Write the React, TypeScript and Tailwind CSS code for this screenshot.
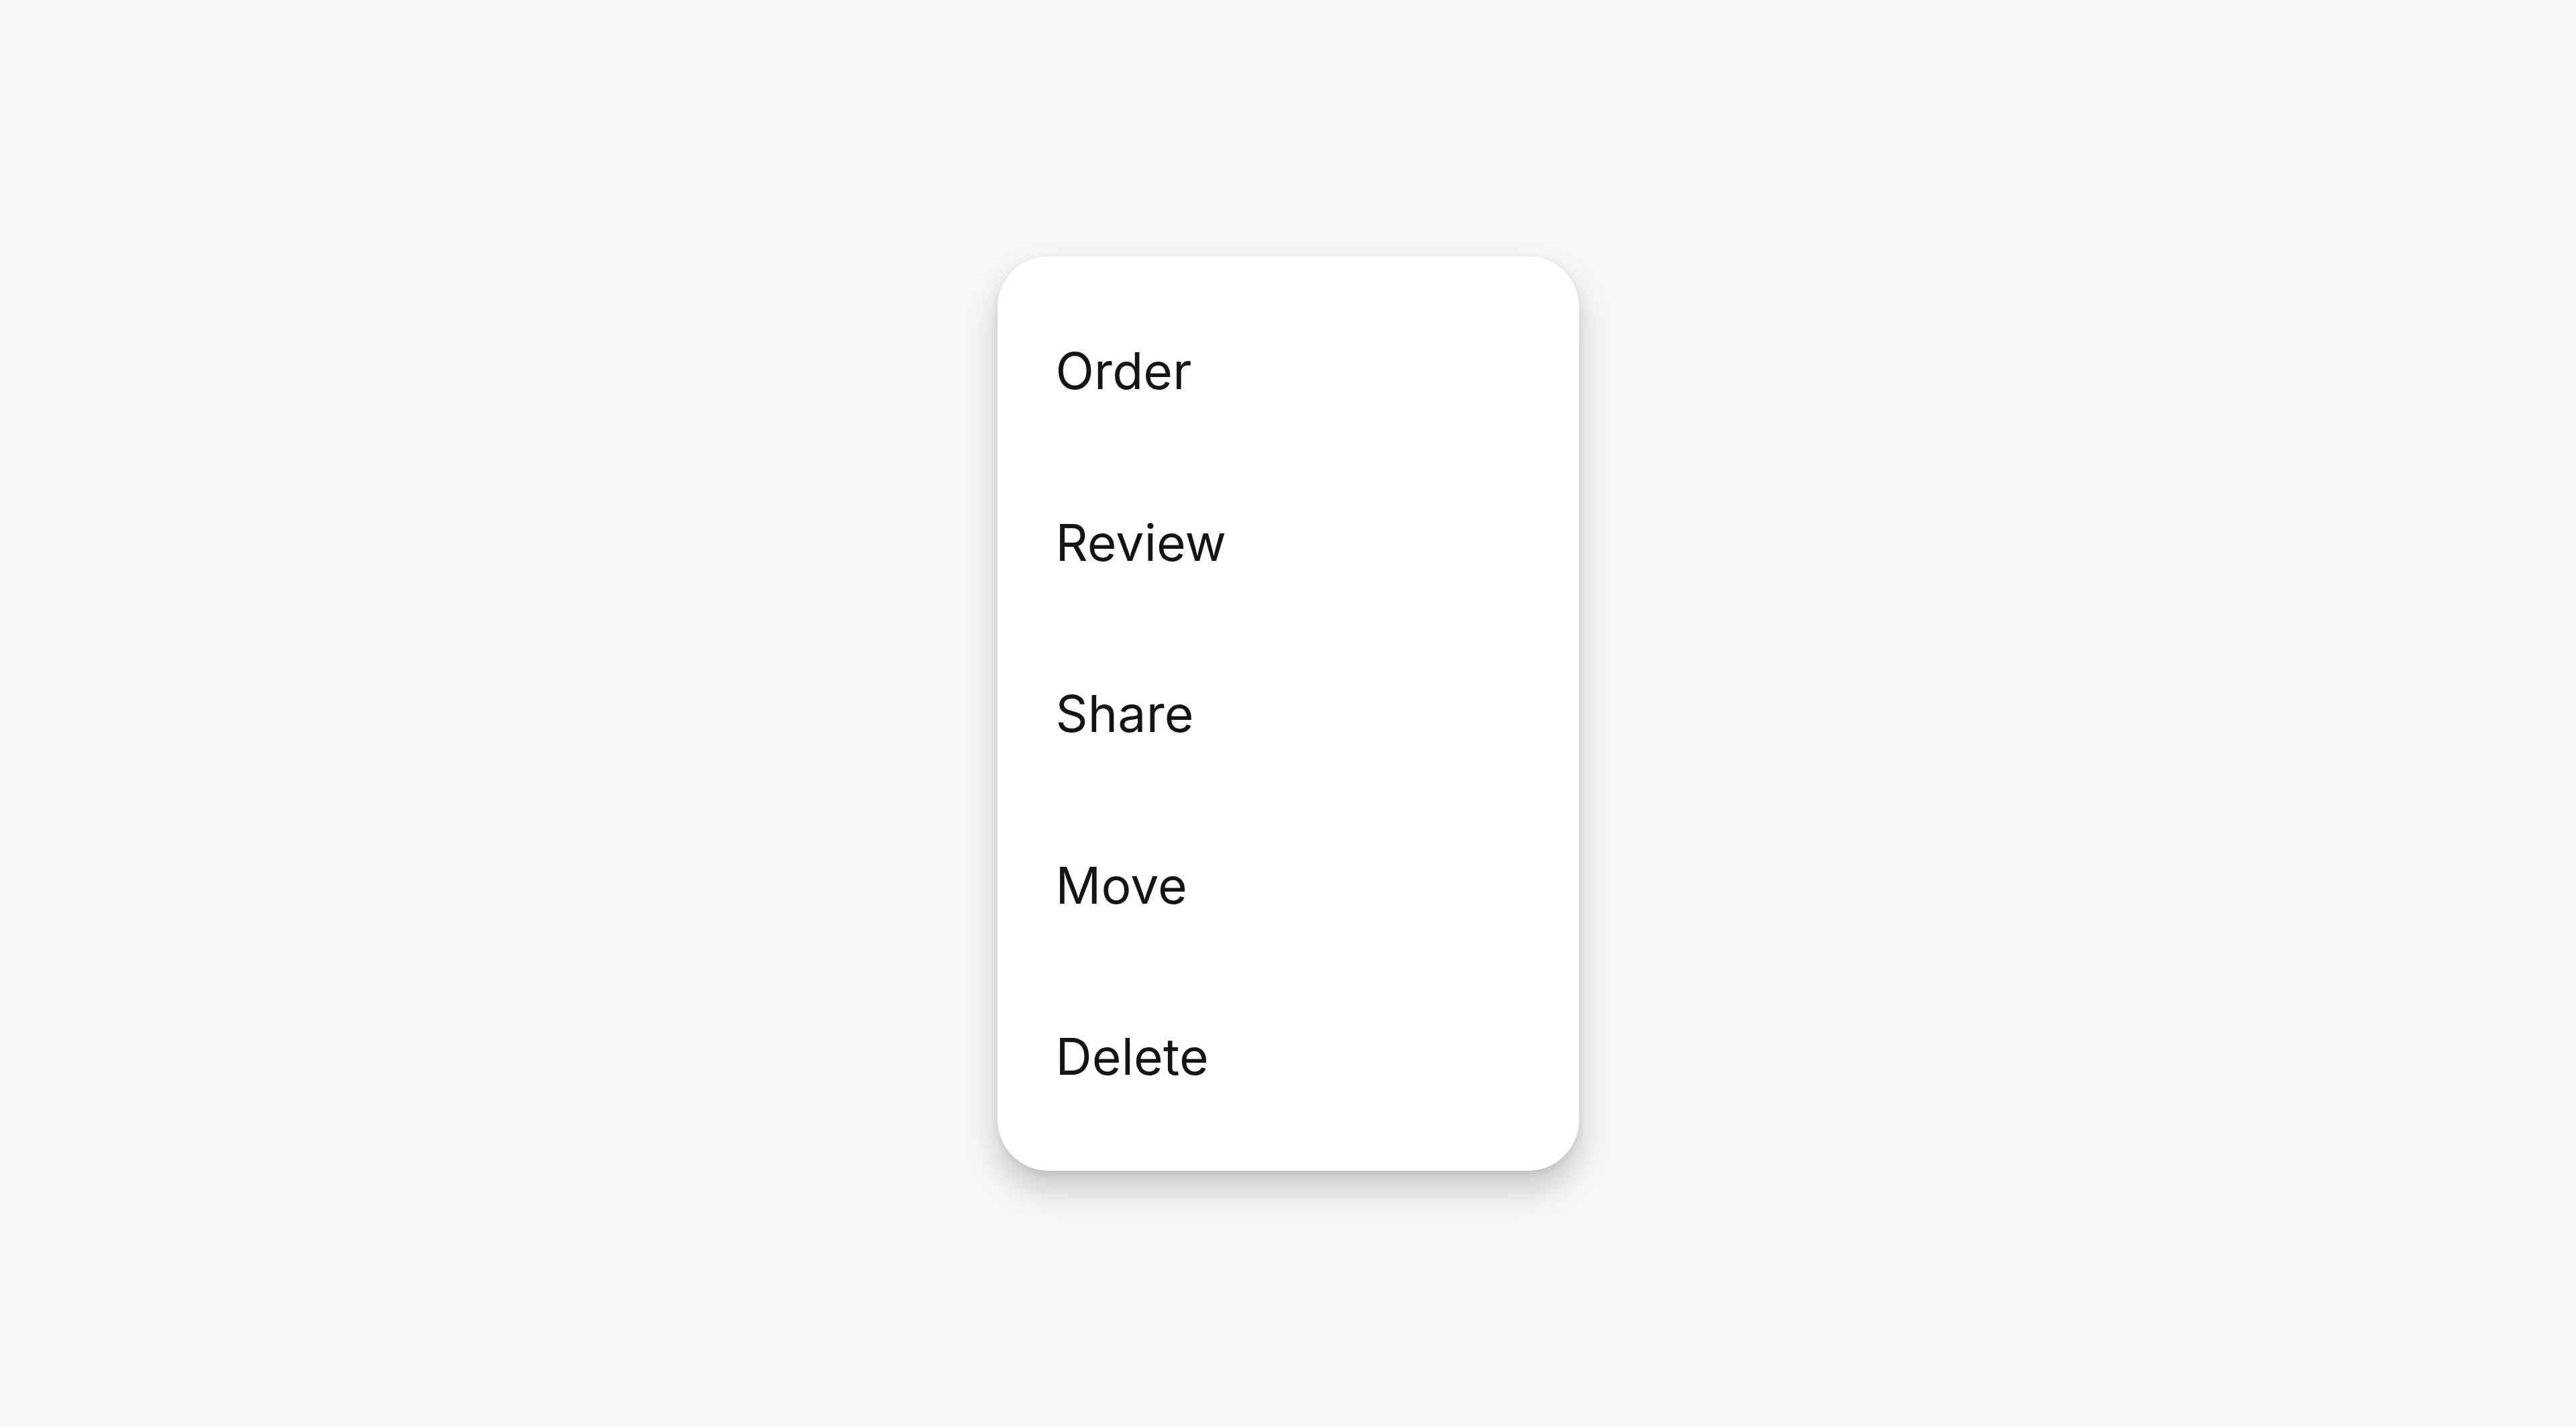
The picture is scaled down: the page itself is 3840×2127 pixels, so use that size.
const items = ['Order', 'Review', 'Share', 'Move', 'Delete'];

export default function App() {
  return (
    <div className="flex min-h-screen items-center justify-center bg-[#f7f7f7] font-['Inter',sans-serif]">
      <div className="w-[867px] rounded-[76px] bg-white py-[43px] shadow-[0_26px_50px_rgba(0,0,0,0.2),0_4px_12px_rgba(0,0,0,0.08)]">
        {items.map((label) => (
          <div
            key={label}
            className="flex h-[255.5px] items-center pl-[87px] pr-[89px] text-[75px] leading-none tracking-[0.2px] text-[#141414]"
          >
            {label}
          </div>
        ))}
      </div>
    </div>
  );
}
